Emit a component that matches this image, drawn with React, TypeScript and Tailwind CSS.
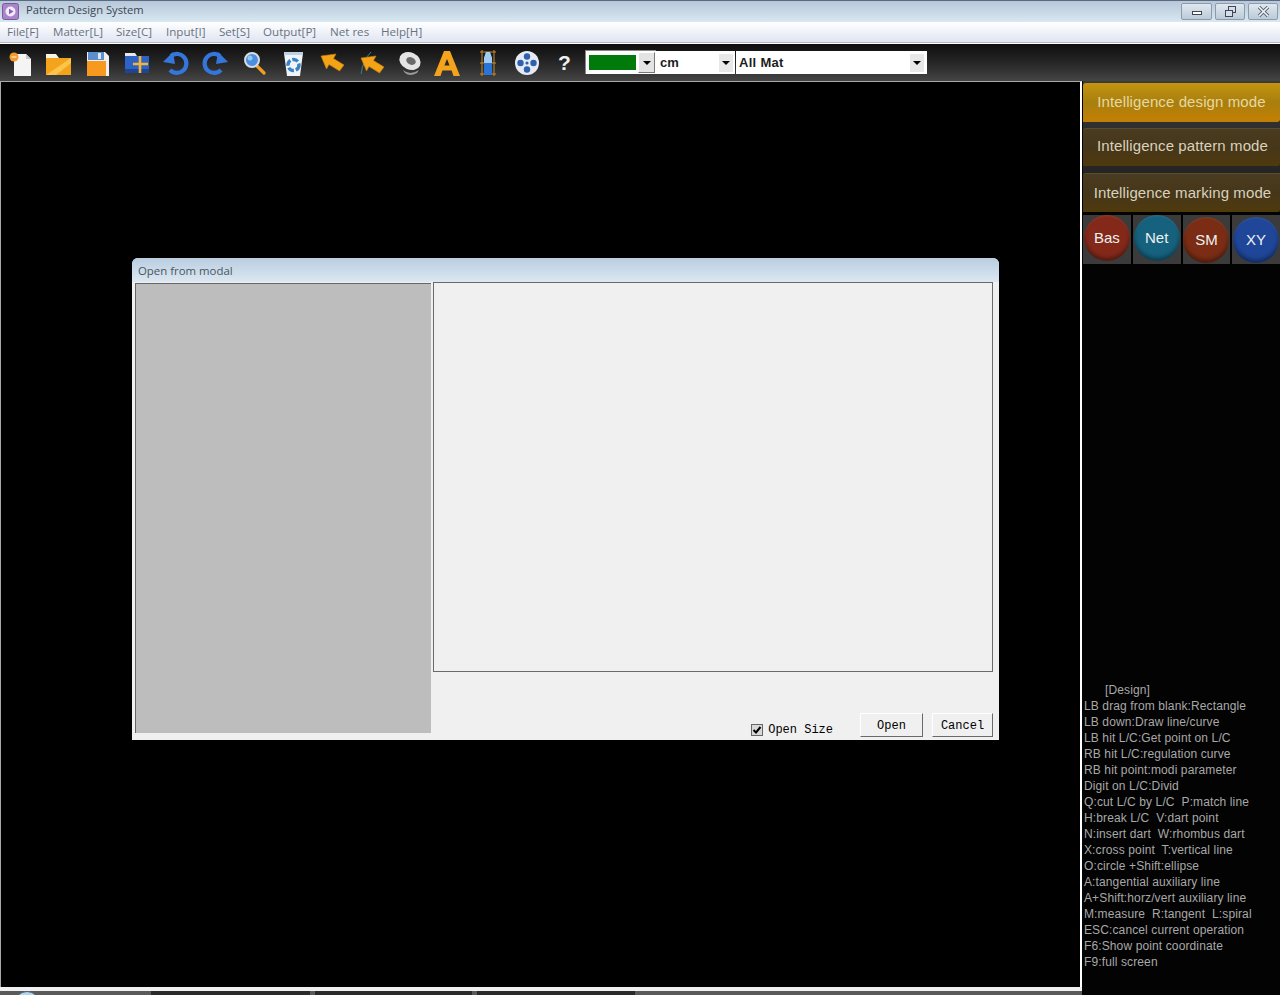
import React from "react";

const sans = "font-['Liberation_Sans',Arial,sans-serif]";
const uiFont = "font-['Open_Sans','Noto_Sans',sans-serif]";
const mono = "font-['Liberation_Mono','Courier_New',monospace]";

const menus = [
  { label: "File[F]", w: "w-[46px]" },
  { label: "Matter[L]", w: "w-[63px]" },
  { label: "Size[C]", w: "w-[50px]" },
  { label: "Input[I]", w: "w-[53px]" },
  { label: "Set[S]", w: "w-[44px]" },
  { label: "Output[P]", w: "w-[67px]" },
  { label: "Net res", w: "w-[51px]" },
  { label: "Help[H]", w: "w-[60px]" },
];

const helpLines = [
  "LB drag from blank:Rectangle",
  "LB down:Draw line/curve",
  "LB hit L/C:Get point on L/C",
  "RB hit L/C:regulation curve",
  "RB hit point:modi parameter",
  "Digit on L/C:Divid",
  "Q:cut L/C by L/C  P:match line",
  "H:break L/C  V:dart point",
  "N:insert dart  W:rhombus dart",
  "X:cross point  T:vertical line",
  "O:circle +Shift:ellipse",
  "A:tangential auxiliary line",
  "A+Shift:horz/vert auxiliary line",
  "M:measure  R:tangent  L:spiral",
  "ESC:cancel current operation",
  "F6:Show point coordinate",
  "F9:full screen",
];

function Svg({ children }: { children: React.ReactNode }) {
  return (
    <svg width="30" height="30" viewBox="0 0 30 30">
      {children}
    </svg>
  );
}

function ArrowIcon({ line }: { line?: boolean }) {
  return (
    <Svg>
      {line && <path d="M5 26 Q7 12 15 4" stroke="#3f7f8a" strokeWidth="1" fill="none" />}
      <path
        d="M4 8 L19 6 L16.5 10.5 L27 17 L22.5 23 L12 16.5 L9.5 21 Z"
        fill="#f2a416"
        stroke="#c97c10"
        strokeWidth="0.6"
        transform={line ? "translate(1 2)" : undefined}
      />
    </Svg>
  );
}

const icons: React.ReactNode[] = [
  <Svg key="new">
    <path d="M9 6 H21 L26 11 V28 H9 Z" fill="#f4f4f4" />
    <path d="M21 6 L26 11 H21 Z" fill="#c8c8c8" />
    <circle cx="9" cy="9" r="4.5" fill="#f29a2e" />
    <rect x="6.5" y="8.3" width="5" height="1.4" fill="#ffe0b0" />
  </Svg>,
  <Svg key="open">
    <path d="M2 6 H12 L15 10 H2 Z" fill="#f8f4e8" />
    <rect x="2" y="10" width="25" height="17" fill="#f4a41c" />
    <path d="M2 27 L27 10 V15 L12 27 Z" fill="#fbc44a" />
  </Svg>,
  <Svg key="save">
    <path d="M4 4 H22 L26 8 V28 H4 Z" fill="#f0f0f0" />
    <rect x="5" y="4" width="16" height="8" fill="#5b8fd0" />
    <rect x="15" y="5" width="3" height="6" fill="#dbe8f6" />
    <rect x="4" y="13" width="19" height="15" fill="#f7981f" />
  </Svg>,
  <Svg key="addfolder">
    <path d="M3 5 H13 L15 8 H3 Z" fill="#e4e8ec" />
    <rect x="3" y="8" width="24" height="17" fill="#2c63c4" />
    <rect x="3" y="21" width="24" height="4" fill="#1d4590" />
    <path d="M18 8 V25 M11 16 H26" stroke="#f4b63a" strokeWidth="2.6" />
  </Svg>,
  <Svg key="undo">
    <path d="M10 8 A9.5 9.5 0 1 1 9 22" stroke="#3576dd" strokeWidth="4.2" fill="none" />
    <path d="M2 14 L12 4 L14 16 Z" fill="#3576dd" />
  </Svg>,
  <Svg key="redo">
    <path d="M20 8 A9.5 9.5 0 1 0 21 22" stroke="#3576dd" strokeWidth="4.2" fill="none" />
    <path d="M28 14 L18 4 L16 16 Z" fill="#3576dd" />
  </Svg>,
  <Svg key="search">
    <path d="M17 17 L25 25" stroke="#f0a020" strokeWidth="3.2" strokeLinecap="round" />
    <circle cx="13" cy="12" r="7" fill="#4a90e0" stroke="#d8dce0" strokeWidth="2" />
    <circle cx="11" cy="10" r="2.5" fill="#9cc6f0" />
  </Svg>,
  <Svg key="bin">
    <path d="M6 5 H25 L22 28 H9 Z" fill="#eef4f8" />
    <rect x="6" y="4" width="19" height="3" fill="#c0d0dc" />
    <circle cx="15.5" cy="17" r="5.5" fill="none" stroke="#3c80c8" strokeWidth="3.4" strokeDasharray="6 2" />
  </Svg>,
  <ArrowIcon key="arrow" />,
  <ArrowIcon key="arrowline" line />,
  <Svg key="tape">
    <ellipse cx="15" cy="13" rx="11" ry="8.5" transform="rotate(25 15 13)" fill="#e4e4e4" />
    <ellipse cx="16" cy="13" rx="5" ry="3.6" transform="rotate(25 16 13)" fill="#6a6a6a" />
    <path d="M8 22 Q15 28 24 22 L22 25 Q15 29 10 25 Z" fill="#9a9a9a" />
  </Svg>,
  <Svg key="text">
    <path
      d="M10 3 H16 L26 28 H19.5 L17.6 22.5 H8.4 L6.5 28 H0 Z M13 11 L10.4 17.5 H15.6 Z"
      fill="#f4a41c"
      fillRule="evenodd"
    />
  </Svg>,
  <Svg key="figure">
    <path d="M9 2 V28 M21 2 V28 M7 4 H23 M7 15 H23 M7 26 H23" stroke="#c98a2a" strokeWidth="1" />
    <path d="M13 4 H17 L19 10 V27 H11 V10 Z" fill="#2a74d8" />
    <path d="M13 4 H17 L19 10 V15 H11 V10 Z" fill="#a4cbf0" />
  </Svg>,
  <Svg key="reel">
    <circle cx="15" cy="15" r="12" fill="#e6eaf2" />
    <circle cx="15" cy="8.5" r="3.2" fill="#2f5fb0" />
    <circle cx="15" cy="21.5" r="3.2" fill="#2f5fb0" />
    <circle cx="8.5" cy="15" r="3.2" fill="#2f5fb0" />
    <circle cx="21.5" cy="15" r="3.2" fill="#2f5fb0" />
    <circle cx="15" cy="15" r="1.6" fill="#2f5fb0" />
  </Svg>,
  <span key="help" className={`${sans} mr-[2px] text-[21px] leading-none font-bold text-[#f0f0f0]`}>?</span>,
];

function DropArrow() {
  return <span className="w-0 h-0 border-x-[4px] border-x-transparent border-t-[4px] border-t-black" />;
}

function ModeButton({ label, active, className }: { label: string; active?: boolean; className: string }) {
  return (
    <div
      className={`${className} ${sans} flex items-center justify-center rounded-tl-[3px] rounded-br-[3px] whitespace-nowrap text-[15px] tracking-[0.1px] ${
        active
          ? "bg-gradient-to-b from-[#c49410] via-[#a87f0e] to-[#c57f02] text-[#e8d8a0]"
          : "bg-gradient-to-b from-[#4a3c20] via-[#46361a] to-[#4f3a0b] text-[#d8d2bc] border-t border-[#5a4c30]"
      }`}
    >
      {label}
    </div>
  );
}

function RoundButton({ label, color, offset }: { label: string; color: string; offset: string }) {
  return (
    <div className="flex-1 flex justify-center bg-[#3b3b3b]">
      <div
        className={`${color} ${offset} w-[46px] h-[46px] rounded-full flex items-center justify-center text-[15px] text-[#f0f0f0] ${sans} shadow-[inset_0_1px_2px_rgba(255,255,255,0.1),inset_0_-3px_4px_rgba(0,0,0,0.4)]`}
      >
        {label}
      </div>
    </div>
  );
}

function WinButton({ children, w }: { children: React.ReactNode; w: string }) {
  return (
    <div className={`${w} h-[17px] rounded-[2px] border border-[#8c9aaa] bg-gradient-to-b from-[#dfe8f0] to-[#bccbd8] flex items-center justify-center text-[#445]`}>
      {children}
    </div>
  );
}

function DialogButton({ label, w }: { label: string; w: string }) {
  return (
    <div className={`${w} h-[24px] pt-[1px] flex items-center justify-center bg-[#f0f0f0] border border-t-white border-l-white border-r-[#696969] border-b-[#696969] text-[12px] text-black ${mono}`}>
      {label}
    </div>
  );
}

export default function App() {
  return (
    <div className="relative w-[1280px] h-[995px] overflow-hidden bg-black flex flex-col">
      {/* Title bar */}
      <div className="h-[22px] shrink-0 flex items-center border-t border-[#5a6a80] bg-gradient-to-b from-[#b8c7d8] to-[#d8e8f2] pl-[2px] pr-[2px]">
        <svg width="17" height="17" viewBox="0 0 17 17">
          <rect x="0.5" y="0.5" width="16" height="16" rx="2" fill="#a884c8" stroke="#7a5a9c" />
          <circle cx="8.5" cy="8.5" r="5" fill="#f2e8f8" />
          <path d="M7 5.8 L11.5 8.5 L7 11.2 Z" fill="#8a5fb0" />
        </svg>
        <span className={`${uiFont} ml-[7px] mt-[-2px] text-[11.2px] text-[#3c4652]`}>Pattern Design System</span>
        <div className="ml-auto flex gap-[3px] mt-[-1px]">
          <WinButton w="w-[31px]"><span className="w-[10px] h-[4px] border border-[#445] bg-white mt-[3px]" /></WinButton>
          <WinButton w="w-[30px]">
            <span className="relative w-[11px] h-[11px]">
              <span className="absolute right-0 top-0 w-[8px] h-[7px] border border-[#445]" />
              <span className="absolute left-0 bottom-0 w-[8px] h-[7px] border border-[#445] bg-[#d4dee8]" />
            </span>
          </WinButton>
          <WinButton w="w-[30px]">
            <svg width="13" height="11" viewBox="0 0 13 11">
              <path d="M2 1 L11 10 M11 1 L2 10" stroke="#556070" strokeWidth="3.4" />
              <path d="M2 1 L11 10 M11 1 L2 10" stroke="#f4f6f8" strokeWidth="1.6" />
            </svg>
          </WinButton>
        </div>
      </div>

      {/* Menu bar */}
      <div className={`${uiFont} h-[20px] shrink-0 flex items-center pl-[7px] bg-gradient-to-b from-white to-[#dfe5f2] text-[11.6px] text-[#6a7280]`}>
        {menus.map((m) => (
          <span key={m.label} className={`${m.w} whitespace-nowrap`}>{m.label}</span>
        ))}
      </div>
      <div className="h-[2px] shrink-0 bg-[#b8b8b8] border-b border-white" />

      {/* Toolbar */}
      <div className="h-[37px] shrink-0 flex items-center bg-gradient-to-b from-[#0e0e0e] via-[#262626] to-[#454545]">
        {icons.map((icon, i) => (
          <div key={i} className="w-[39px] h-[37px] flex items-center justify-center">{icon}</div>
        ))}
        <div className="w-[71px] h-[24px] mt-[-1px] bg-white flex items-center border-l border-t border-[#888] pl-[3px]">
          <div className="w-[47px] h-[15px] bg-[#007a0a]" />
          <div className="ml-[2px] w-[17px] h-[21px] bg-[#e4e4e4] border border-t-white border-l-white border-b-[#777] border-r-[#777] flex items-center justify-center">
            <DropArrow />
          </div>
        </div>
        <div className={`${sans} w-[79px] h-[23px] bg-white flex items-center justify-between text-[13px] font-bold text-[#1c1c1c] pl-[4px] pr-[2px] pt-[1px]`}>
          cm
          <span className="w-[14px] h-[18px] bg-[#e8e8e8] flex items-center justify-center"><DropArrow /></span>
        </div>
        <div className={`${sans} ml-[1px] w-[191px] h-[23px] bg-white flex items-center justify-between text-[13px] font-bold tracking-[0.3px] text-[#1c1c1c] pl-[3px] pr-[3px] pt-[1px]`}>
          All Mat
          <span className="w-[14px] h-[18px] bg-[#e8e8e8] flex items-center justify-center"><DropArrow /></span>
        </div>
      </div>

      {/* Main */}
      <div className="flex-1 flex min-h-0 bg-[#030303]">
        <div className="w-[1082px] shrink-0 flex flex-col">
          <div className="h-[906px] bg-black border-t border-l border-r-2 border-t-[#a8a8a8] border-l-[#a8a8a8] border-r-white border-b-0" />
          <div className="h-[4px] bg-[#f0f0f0]" />
          <div className="relative flex-1 bg-[#5a5a5a] flex overflow-hidden">
            <span className="absolute left-[14px] top-0 w-[26px] h-[26px] rounded-full bg-[#b8d4e8] border border-[#486078]" />
            <span className="ml-[151px] w-[159px] bg-[#2a2a2a]" />
            <span className="ml-[5px] w-[157px] bg-[#2a2a2a]" />
            <span className="ml-[5px] w-[158px] bg-[#2a2a2a]" />
          </div>
        </div>

        {/* Right panel */}
        <div className="flex-1 flex flex-col pl-[1px]">
          <div className="flex flex-col bg-gradient-to-b from-[#3a3a3a] to-[#1c1c1c] pt-[2px]">
            <ModeButton label="Intelligence design mode" active className="h-[39px]" />
            <ModeButton label="Intelligence pattern mode" className="mt-[6px] h-[38px] pl-[2px] pb-[3px]" />
            <ModeButton label="Intelligence marking mode" className="mt-[7px] h-[39px] pl-[2px] pt-[1px]" />
          </div>
          <div className="mt-[3px] h-[49px] flex gap-[2px] bg-black">
            <RoundButton label="Bas" color="bg-[#84291a]" offset="mt-0" />
            <RoundButton label="Net" color="bg-[#16627e]" offset="mt-0" />
            <RoundButton label="SM" color="bg-[#7a2d14]" offset="mt-[2px]" />
            <RoundButton label="XY" color="bg-[#1f4698]" offset="mt-[2px]" />
          </div>
          <div className={`${sans} mt-[418px] pl-[1px] text-[12px] leading-[16px] tracking-[0.12px] text-[#a8a8a8] whitespace-pre`}>
            <div className="pl-[21px]">[Design]</div>
            {helpLines.map((line) => (
              <div key={line}>{line}</div>
            ))}
          </div>
        </div>
      </div>

      {/* Dialog */}
      <div className="absolute left-[132px] top-[258px] w-[867px] h-[482px] rounded-t-[6px] bg-[#f0f0f0] flex flex-col">
        <div className={`${uiFont} h-[24px] shrink-0 flex items-center pl-[6px] pt-[1px] rounded-t-[6px] text-[11.4px] text-[#4a5560] bg-gradient-to-b from-[#b9cde0] to-[#dce8f2]`}>
          Open from modal
        </div>
        <div className="flex-1 flex pl-[3px] pb-[7px] pr-[6px] min-h-0">
          <div className="w-[296px] mt-[1px] bg-[#bdbdbd] border-t border-l border-[#666666] border-r-0 border-b-0" />
          <div className="ml-[2px] flex-1 flex flex-col">
            <div className="h-[390px] bg-[#f0f0f0] border border-[#6a6a6a]" />
            <div className="flex-1 flex items-end justify-end">
              <div className={`${mono} flex items-center text-[12px] text-black mr-[27px] mb-[-6px]`}>
                <span className="w-[12px] h-[12px] bg-[#d8d8d8] border border-[#666] flex items-center justify-center mr-[5px]">
                  <svg width="10" height="10" viewBox="0 0 10 10">
                    <path d="M1.5 5 L4 7.5 L8.5 2" stroke="#000" strokeWidth="2" fill="none" />
                  </svg>
                </span>
                Open Size
              </div>
              <div className="mb-[-4px]">
                <DialogButton label="Open" w="w-[63px]" />
              </div>
              <div className="ml-[9px] mb-[-4px]">
                <DialogButton label="Cancel" w="w-[61px]" />
              </div>
            </div>
          </div>
        </div>
      </div>
    </div>
  );
}
